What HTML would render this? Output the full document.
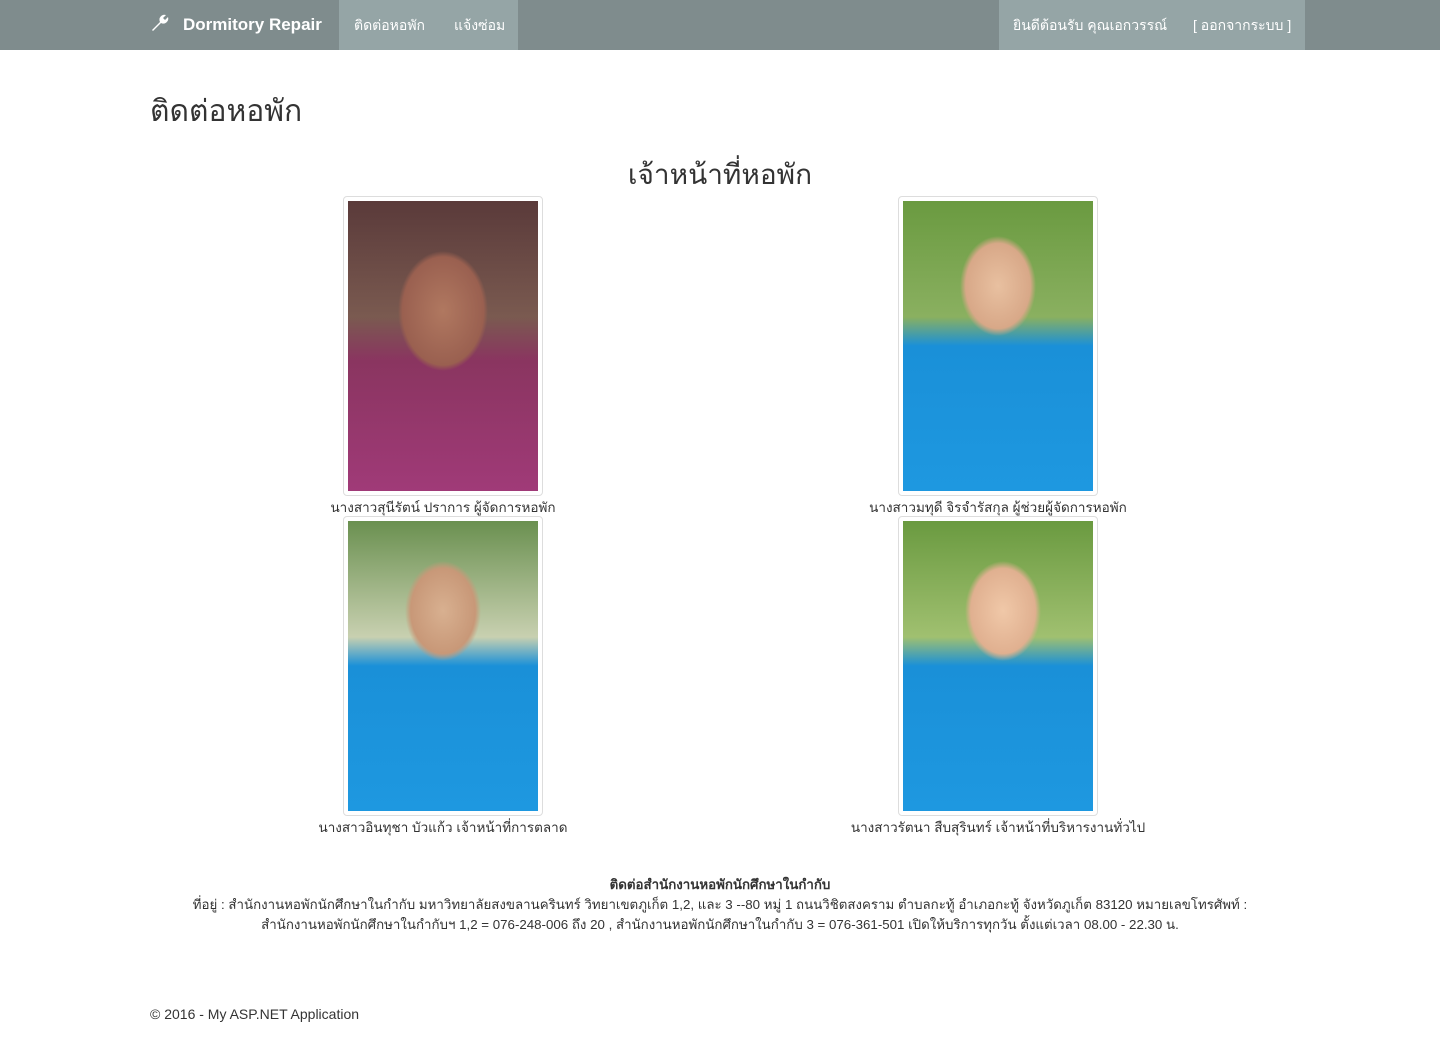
<!DOCTYPE html>
<html><head><meta charset="utf-8"><style>
*{box-sizing:border-box}
body{margin:0;background:#fff;font-family:"Liberation Sans","DejaVu Sans",sans-serif;color:#333;font-size:14px;width:1440px;height:1056px;overflow:hidden;position:relative}
.nav{position:absolute;top:0;left:0;width:1440px;height:50px;background:#7f8c8d;color:#fff}
.brand{position:absolute;left:150px;top:0;height:50px;line-height:50px;font-size:17px;font-weight:bold}
.brand svg{vertical-align:-3px;margin-right:13px}
.links{position:absolute;left:339px;width:179px;top:0;height:50px;background:#95a5a6;font-size:14px}
.links span,.right span{position:absolute;top:15px}
.right{position:absolute;left:999px;width:306px;top:0;height:50px;background:#95a5a6;font-size:14px}
h1{position:absolute;left:150px;top:88px;margin:0;font-size:30px;font-weight:normal;color:#333}
h2{position:absolute;left:0;width:1440px;text-align:center;top:153px;margin:0;font-size:28px;font-weight:normal}
.ph{position:absolute;width:200px;height:300px;border:1px solid #ddd;border-radius:4px;padding:4px;background:#fff}
.ph div{width:190px;height:290px}
.cap{position:absolute;width:500px;text-align:center;font-size:13.5px}
.info{position:absolute;left:150px;width:1140px;text-align:center;top:875px;font-size:13.3px;line-height:20px}
.copy{position:absolute;left:150px;top:1006px;font-size:14px}
</style></head><body>
<div class="nav">
<div class="brand"><svg width="20" height="20" viewBox="0 0 20 20"><path d="M2 17 L10 9 A5 5 0 0 1 16 2 L13 5 L15 7 L18 4 A5 5 0 0 1 11 10 L3 18 Z" fill="#fff"/></svg>Dormitory Repair</div>
<div class="links"><span style="left:15px">ติดต่อหอพัก</span><span style="left:115px">แจ้งซ่อม</span></div>
<div class="right"><span style="left:14px">ยินดีต้อนรับ คุณเอกวรรณ์</span><span style="left:194px">[ ออกจากระบบ ]</span></div>
</div>
<h1>ติดต่อหอพัก</h1>
<h2>เจ้าหน้าที่หอพัก</h2>
<div class="ph" style="left:343px;top:196px"><div style="background:radial-gradient(ellipse 45px 60px at 95px 110px,#b07860 0,#9a6050 90%,transparent 100%),linear-gradient(180deg,#5a3a3a 0,#7a5a50 40%,#8a3560 55%,#a03a78 100%)"></div></div>
<div class="cap" style="left:193px;top:496px">นางสาวสุนีรัตน์ ปราการ ผู้จัดการหอพัก</div>
<div class="ph" style="left:898px;top:196px"><div style="background:radial-gradient(ellipse 38px 50px at 95px 85px,#e8c0a0 0,#d8a888 85%,transparent 100%),linear-gradient(180deg,#6a9a40 0,#8ab060 40%,#1a90d8 50%,#1e98e0 100%)"></div></div>
<div class="cap" style="left:748px;top:496px">นางสาวมทุดี จิรจำรัสกุล ผู้ช่วยผู้จัดการหอพัก</div>
<div class="ph" style="left:343px;top:516px"><div style="background:radial-gradient(ellipse 38px 50px at 95px 90px,#d8b090 0,#c89878 85%,transparent 100%),linear-gradient(180deg,#6a9050 0,#c8d0b0 40%,#1a90d8 50%,#1e98e0 100%)"></div></div>
<div class="cap" style="left:193px;top:816px">นางสาวอินทุชา บัวแก้ว เจ้าหน้าที่การตลาด</div>
<div class="ph" style="left:898px;top:516px"><div style="background:radial-gradient(ellipse 38px 50px at 100px 90px,#f0c8a8 0,#e0b090 85%,transparent 100%),linear-gradient(180deg,#6a9a40 0,#a0c070 40%,#1a90d8 50%,#1e98e0 100%)"></div></div>
<div class="cap" style="left:748px;top:816px">นางสาวรัตนา สืบสุรินทร์ เจ้าหน้าที่บริหารงานทั่วไป</div>
<div class="info"><b>ติดต่อสำนักงานหอพักนักศึกษาในกำกับ</b><br>ที่อยู่ : สำนักงานหอพักนักศึกษาในกำกับ มหาวิทยาลัยสงขลานครินทร์ วิทยาเขตภูเก็ต 1,2, และ 3 --80 หมู่ 1 ถนนวิชิตสงคราม ตำบลกะทู้ อำเภอกะทู้ จังหวัดภูเก็ต 83120 หมายเลขโทรศัพท์ :<br>สำนักงานหอพักนักศึกษาในกำกับฯ 1,2 = 076-248-006 ถึง 20 , สำนักงานหอพักนักศึกษาในกำกับ 3 = 076-361-501 เปิดให้บริการทุกวัน ตั้งแต่เวลา 08.00 - 22.30 น.</div>
<div class="copy">© 2016 - My ASP.NET Application</div>
</body></html>
